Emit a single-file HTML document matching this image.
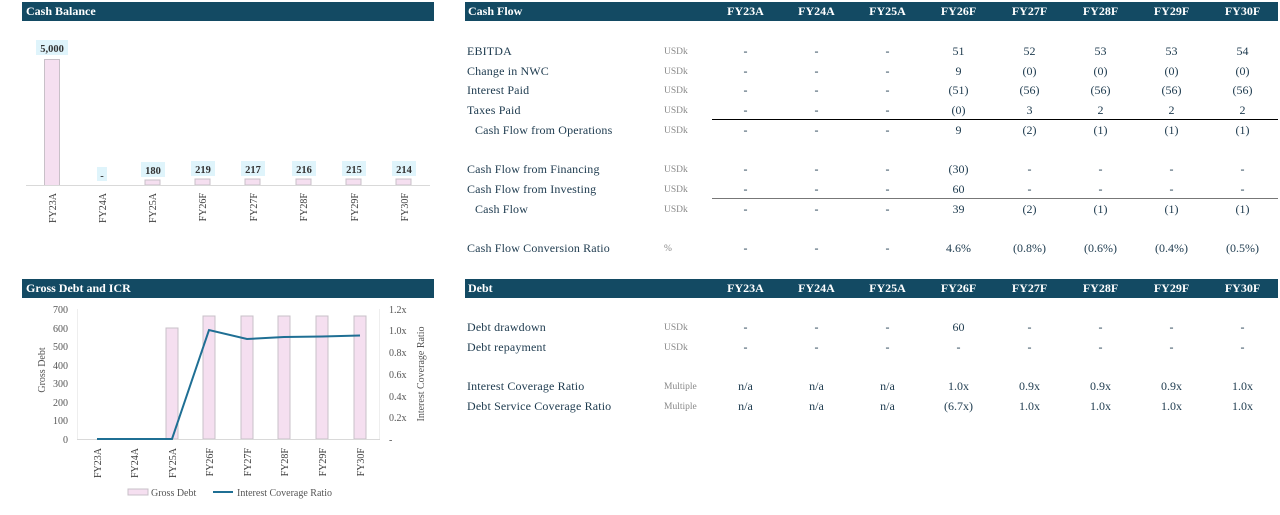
<!DOCTYPE html>
<html><head><meta charset="utf-8"><style>
*{margin:0;padding:0;box-sizing:border-box}
body{width:1280px;height:515px;background:#fff;position:relative;overflow:hidden;font-family:"Liberation Serif",serif;color:#1d3a4e;font-size:12px}
.hd{position:absolute;background:#134a63;color:#fff;font-weight:bold;font-size:12px;height:19px;line-height:19px}
.hd span{position:absolute;top:0}
.lab{position:absolute;left:467px;font-size:12px;line-height:14px;letter-spacing:0.15px}
.u{position:absolute;left:664px;font-size:9.5px;color:#888;line-height:14px;margin-top:1px}
.r{position:absolute;left:710px;display:flex;line-height:14px}
.r div{width:71px;text-align:center}
.hr{position:absolute;left:710px;display:flex;top:0}
.hr div{width:71px;text-align:center}
.ln{position:absolute;left:712px;width:566px;height:1px}
</style></head><body>
<div class="hd" style="left:22px;top:2px;width:412px"><span style="left:4px">Cash Balance</span></div>
<div class="hd" style="left:22px;top:279px;width:412px"><span style="left:4px">Gross Debt and ICR</span></div>
<div class="hd" style="left:465px;top:2px;width:813px"><span style="left:3px">Cash Flow</span><div class="hr" style="left:245px"><div>FY23A</div><div>FY24A</div><div>FY25A</div><div>FY26F</div><div>FY27F</div><div>FY28F</div><div>FY29F</div><div>FY30F</div></div></div>
<div class="hd" style="left:465px;top:279px;width:813px"><span style="left:3px">Debt</span><div class="hr" style="left:245px"><div>FY23A</div><div>FY24A</div><div>FY25A</div><div>FY26F</div><div>FY27F</div><div>FY28F</div><div>FY29F</div><div>FY30F</div></div></div>

<div class="lab" style="top:44px">EBITDA</div><div class="u" style="top:44px">USDk</div>
<div class="r" style="top:44px"><div>-</div><div>-</div><div>-</div><div>51</div><div>52</div><div>53</div><div>53</div><div>54</div></div>
<div class="lab" style="top:64px">Change in NWC</div><div class="u" style="top:64px">USDk</div>
<div class="r" style="top:64px"><div>-</div><div>-</div><div>-</div><div>9</div><div>(0)</div><div>(0)</div><div>(0)</div><div>(0)</div></div>
<div class="lab" style="top:83px">Interest Paid</div><div class="u" style="top:83px">USDk</div>
<div class="r" style="top:83px"><div>-</div><div>-</div><div>-</div><div>(51)</div><div>(56)</div><div>(56)</div><div>(56)</div><div>(56)</div></div>
<div class="lab" style="top:103px">Taxes Paid</div><div class="u" style="top:103px">USDk</div>
<div class="r" style="top:103px"><div>-</div><div>-</div><div>-</div><div>(0)</div><div>3</div><div>2</div><div>2</div><div>2</div></div>
<div class="ln" style="top:119px;background:#000"></div>
<div class="lab" style="top:123px;left:475px">Cash Flow from Operations</div><div class="u" style="top:123px">USDk</div>
<div class="r" style="top:123px"><div>-</div><div>-</div><div>-</div><div>9</div><div>(2)</div><div>(1)</div><div>(1)</div><div>(1)</div></div>
<div class="lab" style="top:162px">Cash Flow from Financing</div><div class="u" style="top:162px">USDk</div>
<div class="r" style="top:162px"><div>-</div><div>-</div><div>-</div><div>(30)</div><div>-</div><div>-</div><div>-</div><div>-</div></div>
<div class="lab" style="top:182px">Cash Flow from Investing</div><div class="u" style="top:182px">USDk</div>
<div class="r" style="top:182px"><div>-</div><div>-</div><div>-</div><div>60</div><div>-</div><div>-</div><div>-</div><div>-</div></div>
<div class="ln" style="top:198px;background:#777"></div>
<div class="lab" style="top:202px;left:475px">Cash Flow</div><div class="u" style="top:202px">USDk</div>
<div class="r" style="top:202px"><div>-</div><div>-</div><div>-</div><div>39</div><div>(2)</div><div>(1)</div><div>(1)</div><div>(1)</div></div>
<div class="lab" style="top:241px">Cash Flow Conversion Ratio</div><div class="u" style="top:241px">%</div>
<div class="r" style="top:241px"><div>-</div><div>-</div><div>-</div><div>4.6%</div><div>(0.8%)</div><div>(0.6%)</div><div>(0.4%)</div><div>(0.5%)</div></div>

<div class="lab" style="top:320px">Debt drawdown</div><div class="u" style="top:320px">USDk</div>
<div class="r" style="top:320px"><div>-</div><div>-</div><div>-</div><div>60</div><div>-</div><div>-</div><div>-</div><div>-</div></div>
<div class="lab" style="top:340px">Debt repayment</div><div class="u" style="top:340px">USDk</div>
<div class="r" style="top:340px"><div>-</div><div>-</div><div>-</div><div>-</div><div>-</div><div>-</div><div>-</div><div>-</div></div>
<div class="lab" style="top:379px">Interest Coverage Ratio</div><div class="u" style="top:379px">Multiple</div>
<div class="r" style="top:379px"><div>n/a</div><div>n/a</div><div>n/a</div><div>1.0x</div><div>0.9x</div><div>0.9x</div><div>0.9x</div><div>1.0x</div></div>
<div class="lab" style="top:399px">Debt Service Coverage Ratio</div><div class="u" style="top:399px">Multiple</div>
<div class="r" style="top:399px"><div>n/a</div><div>n/a</div><div>n/a</div><div>(6.7x)</div><div>1.0x</div><div>1.0x</div><div>1.0x</div><div>1.0x</div></div>

<svg style="position:absolute;left:0;top:0" width="440" height="515" font-family="Liberation Serif, serif">
<g fill="#f5dff0" stroke="#c8c0c8" stroke-width="1">
<rect x="44.5" y="59.5" width="15" height="126"/>
<rect x="145" y="180" width="15" height="5"/>
<rect x="195" y="179" width="15" height="6"/>
<rect x="245" y="179" width="15" height="6"/>
<rect x="296" y="179" width="15" height="6"/>
<rect x="346" y="179" width="15" height="6"/>
<rect x="396" y="179" width="15" height="6"/>
</g>
<line x1="26" y1="185.5" x2="430" y2="185.5" stroke="#d9d9d9"/>
<g fill="#dff4fb"><rect x="36" y="40" width="32" height="15"/><rect x="97" y="167" width="10" height="14"/><rect x="141" y="162" width="24" height="15"/><rect x="191" y="161" width="24" height="15"/><rect x="241" y="161" width="24" height="15"/><rect x="292" y="161" width="24" height="15"/><rect x="342" y="161" width="24" height="15"/><rect x="392" y="161" width="24" height="15"/></g>
<g font-size="10.5" font-weight="bold" fill="#333" text-anchor="middle">
<text x="52" y="52">5,000</text><text x="102" y="179">-</text><text x="153" y="174">180</text><text x="203" y="173">219</text><text x="253" y="173">217</text><text x="304" y="173">216</text><text x="354" y="173">215</text><text x="404" y="173">214</text></g>
<g font-size="10" fill="#404040" text-anchor="end">
<text transform="translate(56,193) rotate(-90)">FY23A</text><text transform="translate(106,193) rotate(-90)">FY24A</text><text transform="translate(156,193) rotate(-90)">FY25A</text><text transform="translate(206,193) rotate(-90)">FY26F</text><text transform="translate(257,193) rotate(-90)">FY27F</text><text transform="translate(307,193) rotate(-90)">FY28F</text><text transform="translate(358,193) rotate(-90)">FY29F</text><text transform="translate(408,193) rotate(-90)">FY30F</text></g>

<g fill="#f5dff0" stroke="#c8c0c8"><rect x="166" y="328" width="12" height="111"/><rect x="203" y="316" width="12" height="123"/><rect x="241" y="316" width="12" height="123"/><rect x="278" y="316" width="12" height="123"/><rect x="316" y="316" width="12" height="123"/><rect x="354" y="316" width="12" height="123"/></g>
<line x1="77" y1="439.5" x2="380" y2="439.5" stroke="#d9d9d9"/>
<line x1="77.5" y1="309" x2="77.5" y2="439" stroke="#eee"/>
<line x1="379.5" y1="309" x2="379.5" y2="439" stroke="#eee"/>
<polyline points="97,439 134,439 172,439 209,330 247,339 284,337 322,336.5 360,335.5" fill="none" stroke="#1f6f94" stroke-width="2"/>
<g font-size="10" fill="#555" text-anchor="end">
<text x="68" y="313">700</text><text x="68" y="332">600</text><text x="68" y="350">500</text><text x="68" y="369">400</text><text x="68" y="387">300</text><text x="68" y="406">200</text><text x="68" y="424">100</text><text x="68" y="443">0</text></g>
<g font-size="10" fill="#555"><text x="389" y="313">1.2x</text><text x="389" y="334">1.0x</text><text x="389" y="356">0.8x</text><text x="389" y="378">0.6x</text><text x="389" y="400">0.4x</text><text x="389" y="421">0.2x</text><text x="389" y="443">-</text></g>
<text transform="translate(45,370) rotate(-90)" font-size="10" fill="#555" text-anchor="middle">Gross Debt</text>
<text transform="translate(424,374) rotate(-90)" font-size="10" fill="#555" text-anchor="middle">Interest Coverage Ratio</text>
<g font-size="10" fill="#404040" text-anchor="end">
<text transform="translate(101,448) rotate(-90)">FY23A</text><text transform="translate(138,448) rotate(-90)">FY24A</text><text transform="translate(176,448) rotate(-90)">FY25A</text><text transform="translate(213,448) rotate(-90)">FY26F</text><text transform="translate(251,448) rotate(-90)">FY27F</text><text transform="translate(288,448) rotate(-90)">FY28F</text><text transform="translate(326,448) rotate(-90)">FY29F</text><text transform="translate(364,448) rotate(-90)">FY30F</text></g>
<rect x="128" y="489" width="20" height="6" fill="#f5dff0" stroke="#c8c0c8"/>
<text x="151" y="496" font-size="10" fill="#555">Gross Debt</text>
<line x1="213" y1="492" x2="233" y2="492" stroke="#1f6f94" stroke-width="2"/>
<text x="237" y="496" font-size="10" fill="#555">Interest Coverage Ratio</text>
</svg>
</body></html>
